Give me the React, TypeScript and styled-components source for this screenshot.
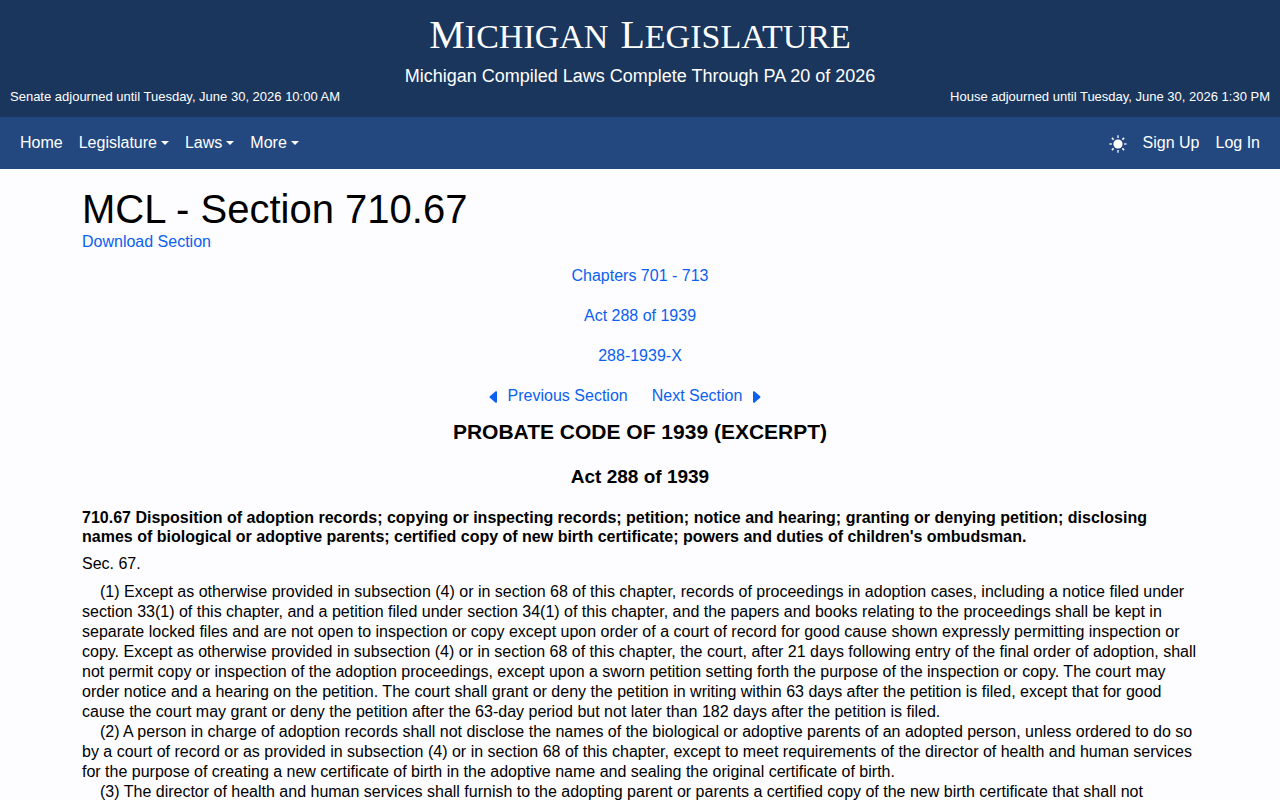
import React from "react";
import styled, { createGlobalStyle } from "styled-components";
import { BsCaretLeftFill, BsCaretRightFill } from "react-icons/bs";

const GlobalStyle = createGlobalStyle`
  *, *::before, *::after { box-sizing: border-box; }
  body {
    margin: 0;
    background: #fdfdff;
    color: #000;
    font: 16px/20px "Liberation Sans", Arial, sans-serif;
  }
  h1, h2, h3, h4, p, ul { margin: 0; padding: 0; }
`;

const Masthead = styled.header`
  background: #1a365d;
  color: #fff;
  padding: 13px 10px 10px;
  text-align: center;
`;

const SiteTitle = styled.div`
  display: flex;
  justify-content: center;
  gap: 12px;
  font-family: "Liberation Serif", "Times New Roman", serif;
  line-height: 48px;
`;

const TitleWord = styled.span`
  display: block;
  font-size: 34px;
  text-transform: uppercase;

  &::first-letter {
    font-size: 40px;
    line-height: 40px;
  }
`;

const Currency = styled.p`
  font-size: 18px;
  line-height: 20px;
  padding-top: 5px;
`;

const Sessions = styled.div`
  display: flex;
  justify-content: space-between;
  padding-top: 1px;
  font-size: 13px;
  line-height: 20px;
`;

const NavBar = styled.nav`
  display: flex;
  justify-content: space-between;
  align-items: center;
  height: 52px;
  padding: 0 12px;
  background: #22487f;
`;

const NavList = styled.ul`
  display: flex;
  align-items: center;
  list-style: none;
`;

const NavLink = styled.a`
  display: block;
  padding: 8px;
  color: #fff;
  text-decoration: none;
`;

const NavButton = styled.button<{ $caret?: boolean }>`
  display: flex;
  align-items: center;
  padding: 8px;
  border: 0;
  background: none;
  color: #fff;
  font: inherit;
  cursor: pointer;

  &::after {
    content: "";
    display: ${(p) => (p.$caret ? "block" : "none")};
    margin-left: 4px;
    border: 4px solid transparent;
    border-top-color: currentColor;
    border-bottom: 0;
  }
`;

const ThemeButton = styled(NavButton)`
  padding: 10px 8px 8px;
`;

const Container = styled.main`
  max-width: 1140px;
  margin: 0 auto;
  padding: 18px 12px 0;
`;

const PageTitle = styled.h1`
  font-size: 40px;
  line-height: 45px;
  font-weight: 400;
`;

const TextLink = styled.a`
  display: inline-flex;
  align-items: center;
  gap: 6px;
  color: #0b61ee;
  text-decoration: none;
`;

const Trail = styled.div`
  display: flex;
  flex-direction: column;
  align-items: center;
  gap: 20px;
  padding-top: 14px;
`;

const Pager = styled.div`
  display: flex;
  gap: 24px;
  margin-right: 30px;
  svg { margin-top: 2px; }
`;

const ActTitle = styled.h2`
  padding-top: 13px;
  font-size: 21px;
  line-height: 26px;
  text-align: center;
`;

const ActNumber = styled.h3`
  padding: 20px 0;
  font-size: 19px;
  line-height: 23px;
  text-align: center;
`;

const CatchLine = styled.h4`
  font-size: 16px;
  line-height: 19px;
`;

const SectionLabel = styled.p`
  padding: 8px 0;
`;

const Paragraph = styled.p`
  text-indent: 18px;
`;

const SunIcon = () => (
  <svg width="18" height="18" viewBox="0 0 18 18" fill="none" stroke="currentColor" aria-hidden="true">
    <circle cx="9" cy="9" r="4.6" fill="currentColor" stroke="none" />
    <path
      d="M9 0.3V3M9 15v2.7M0.3 9H3M15 9h2.7"
      strokeWidth="1.6"
      strokeOpacity="0.8"
    />
    <path
      d="M2.9 2.9l1.7 1.7M13.4 13.4l1.7 1.7M2.9 15.1l1.7-1.7M13.4 4.6l1.7-1.7"
      strokeWidth="1.5"
    />
  </svg>
);

const menus = ["Legislature", "Laws", "More"];
const trail = ["Chapters 701 - 713", "Act 288 of 1939", "288-1939-X"];

const paragraphs = [
  "(1) Except as otherwise provided in subsection (4) or in section 68 of this chapter, records of proceedings in adoption cases, including a notice filed under section 33(1) of this chapter, and a petition filed under section 34(1) of this chapter, and the papers and books relating to the proceedings shall be kept in separate locked files and are not open to inspection or copy except upon order of a court of record for good cause shown expressly permitting inspection or copy. Except as otherwise provided in subsection (4) or in section 68 of this chapter, the court, after 21 days following entry of the final order of adoption, shall not permit copy or inspection of the adoption proceedings, except upon a sworn petition setting forth the purpose of the inspection or copy. The court may order notice and a hearing on the petition. The court shall grant or deny the petition in writing within 63 days after the petition is filed, except that for good cause the court may grant or deny the petition after the 63-day period but not later than 182 days after the petition is filed.",
  "(2) A person in charge of adoption records shall not disclose the names of the biological or adoptive parents of an adopted person, unless ordered to do so by a court of record or as provided in subsection (4) or in section 68 of this chapter, except to meet requirements of the director of health and human services for the purpose of creating a new certificate of birth in the adoptive name and sealing the original certificate of birth.",
  "(3) The director of health and human services shall furnish to the adopting parent or parents a certified copy of the new birth certificate that shall not",
];

export default function App() {
  return (
    <>
      <GlobalStyle />
      <Masthead>
        <SiteTitle>
          <TitleWord>Michigan</TitleWord> <TitleWord>Legislature</TitleWord>
        </SiteTitle>
        <Currency>Michigan Compiled Laws Complete Through PA 20 of 2026</Currency>
        <Sessions>
          <span>Senate adjourned until Tuesday, June 30, 2026 10:00 AM</span>
          <span>House adjourned until Tuesday, June 30, 2026 1:30 PM</span>
        </Sessions>
      </Masthead>
      <NavBar>
        <NavList>
          <li><NavLink href="#home">Home</NavLink></li>
          {menus.map((name) => (
            <li key={name}>
              <NavButton type="button" $caret aria-haspopup="true">{name}</NavButton>
            </li>
          ))}
        </NavList>
        <NavList>
          <li>
            <ThemeButton type="button" aria-label="Toggle theme"><SunIcon /></ThemeButton>
          </li>
          <li><NavLink href="#signup">Sign Up</NavLink></li>
          <li><NavLink href="#login">Log In</NavLink></li>
        </NavList>
      </NavBar>
      <Container>
        <PageTitle>MCL - Section 710.67</PageTitle>
        <TextLink href="#download">Download Section</TextLink>
        <Trail>
          {trail.map((name) => (
            <TextLink key={name} href="#trail">{name}</TextLink>
          ))}
          <Pager>
            <TextLink href="#previous"><BsCaretLeftFill size={16} />Previous Section</TextLink>
            <TextLink href="#next">Next Section<BsCaretRightFill size={16} /></TextLink>
          </Pager>
        </Trail>
        <ActTitle>PROBATE CODE OF 1939 (EXCERPT)</ActTitle>
        <ActNumber>Act 288 of 1939</ActNumber>
        <CatchLine>
          710.67 Disposition of adoption records; copying or inspecting records; petition; notice and hearing; granting or denying petition; disclosing names of biological or adoptive parents; certified copy of new birth certificate; powers and duties of children's ombudsman.
        </CatchLine>
        <SectionLabel>Sec. 67.</SectionLabel>
        {paragraphs.map((text) => (
          <Paragraph key={text}>{text}</Paragraph>
        ))}
      </Container>
    </>
  );
}
